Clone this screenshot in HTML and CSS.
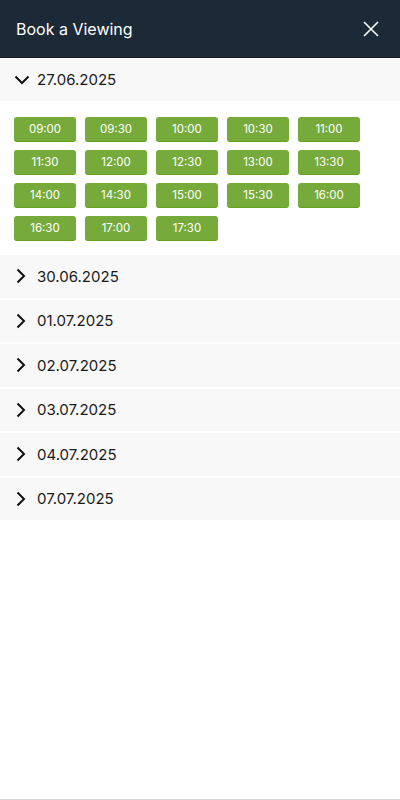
FILE: index.html
```html
<!DOCTYPE html>
<html lang="en">
<head>
    <meta charset="UTF-8">
    <meta name="viewport" content="width=device-width, initial-scale=1.0">
    <title>Book a Viewing</title>
    <link rel="stylesheet" href="styles.css">
</head>
<body>
    <div class="page">
        <header class="topbar">
            <h1>Book a Viewing</h1>
            <button class="close" aria-label="Close">
                <svg width="16" height="16" viewBox="0 0 16 16"><path d="M1 1L15 15M15 1L1 15" stroke="#fff" stroke-width="1.6" fill="none"/></svg>
            </button>
        </header>

        <div class="day open">
            <div class="day-head">
                <svg class="chev-down" width="16" height="10" viewBox="0 0 16 10"><path d="M1.5 1.5L8 8L14.5 1.5" stroke="#111" stroke-width="2" fill="none"/></svg>
                <span>27.06.2025</span>
            </div>
            <div class="slots">
                <button class="slot">09:00</button>
                <button class="slot">09:30</button>
                <button class="slot">10:00</button>
                <button class="slot">10:30</button>
                <button class="slot">11:00</button>
                <button class="slot">11:30</button>
                <button class="slot">12:00</button>
                <button class="slot">12:30</button>
                <button class="slot">13:00</button>
                <button class="slot">13:30</button>
                <button class="slot">14:00</button>
                <button class="slot">14:30</button>
                <button class="slot">15:00</button>
                <button class="slot">15:30</button>
                <button class="slot">16:00</button>
                <button class="slot">16:30</button>
                <button class="slot">17:00</button>
                <button class="slot">17:30</button>
            </div>
        </div>

        <div class="day"><div class="day-head"><svg class="chev-right" width="10" height="16" viewBox="0 0 10 16"><path d="M1.5 1.5L8 8L1.5 14.5" stroke="#111" stroke-width="2" fill="none"/></svg><span>30.06.2025</span></div></div>
        <div class="day"><div class="day-head"><svg class="chev-right" width="10" height="16" viewBox="0 0 10 16"><path d="M1.5 1.5L8 8L1.5 14.5" stroke="#111" stroke-width="2" fill="none"/></svg><span>01.07.2025</span></div></div>
        <div class="day"><div class="day-head"><svg class="chev-right" width="10" height="16" viewBox="0 0 10 16"><path d="M1.5 1.5L8 8L1.5 14.5" stroke="#111" stroke-width="2" fill="none"/></svg><span>02.07.2025</span></div></div>
        <div class="day"><div class="day-head"><svg class="chev-right" width="10" height="16" viewBox="0 0 10 16"><path d="M1.5 1.5L8 8L1.5 14.5" stroke="#111" stroke-width="2" fill="none"/></svg><span>03.07.2025</span></div></div>
        <div class="day"><div class="day-head"><svg class="chev-right" width="10" height="16" viewBox="0 0 10 16"><path d="M1.5 1.5L8 8L1.5 14.5" stroke="#111" stroke-width="2" fill="none"/></svg><span>04.07.2025</span></div></div>
        <div class="day"><div class="day-head"><svg class="chev-right" width="10" height="16" viewBox="0 0 10 16"><path d="M1.5 1.5L8 8L1.5 14.5" stroke="#111" stroke-width="2" fill="none"/></svg><span>07.07.2025</span></div></div>

        <div class="spacer"></div>
    </div>
</body>
</html>
```

FILE: styles.css
```css
body {
    margin: 0;
    font-family: Inter, "Open Sans", sans-serif;
    background-color: #fff;
    color: #1a1a1a;
}
.page {
    display: flex;
    flex-direction: column;
    height: 800px;
    box-sizing: border-box;
    border-bottom: 1px solid #d6d6d6;
}
.topbar {
    display: flex;
    align-items: center;
    justify-content: space-between;
    height: 57px;
    padding: 0 21px 0 16px;
    background-color: #1b2a36;
    border-bottom: 1px solid #0f171d;
}
.topbar h1 {
    margin: 0;
    font-size: 16px;
    font-weight: 400;
    color: #fff;
}
.close {
    display: flex;
    padding: 0;
    background: none;
    border: none;
    cursor: pointer;
}
.day {
    margin-bottom: 2px;
}
.day-head {
    display: flex;
    align-items: center;
    height: 42.5px;
    padding-left: 16px;
    background-color: #f8f8f8;
    font-size: 15px;
}
.day-head span {
    margin-left: 11px;
}
.chev-down {
    margin-left: -2px;
    margin-right: -4px;
}
.day.open {
    margin-bottom: 0;
}
.day.open .day-head {
    height: 43px;
}
.slots {
    display: grid;
    grid-template-columns: repeat(5, 62px);
    gap: 8px 9px;
    padding: 16px 14px 14px;
}
.slot {
    height: 25px;
    padding: 0;
    background-color: #76ab3b;
    border: none;
    border-bottom: 1px solid #64a11f;
    border-radius: 3px;
    color: #fff;
    font-family: inherit;
    font-size: 11.5px;
}
.spacer {
    flex: 1;
}
```
